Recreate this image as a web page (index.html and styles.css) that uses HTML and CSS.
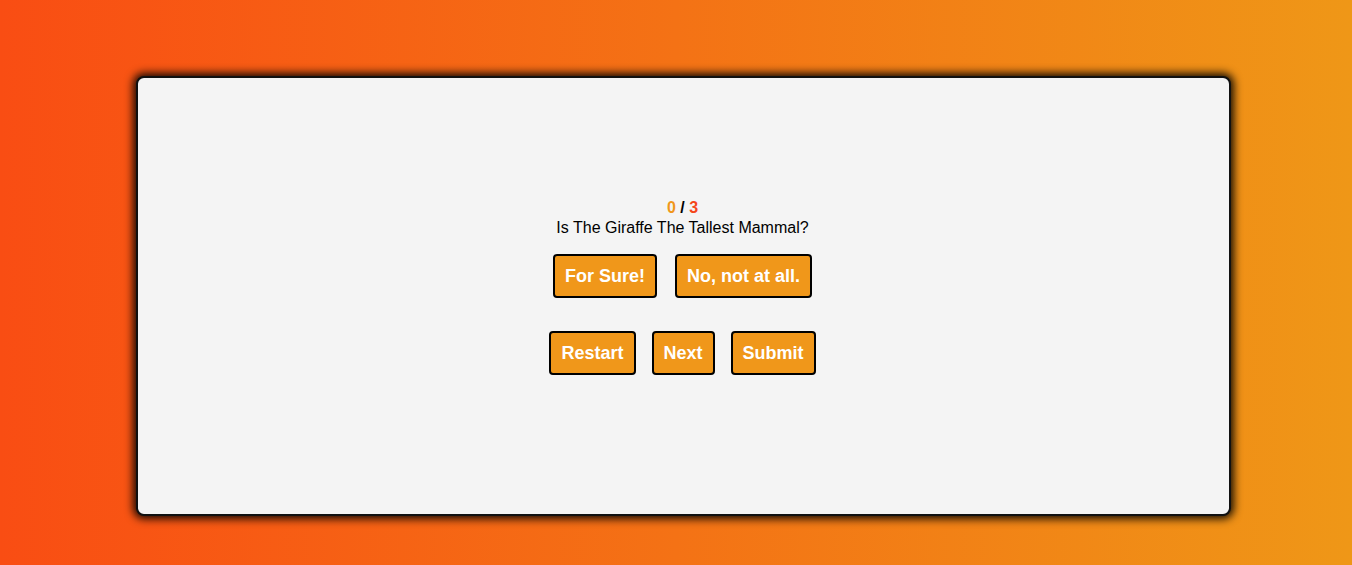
FILE: index.html
```html
<!DOCTYPE html>
<html lang="en">
<head>
<meta charset="utf-8">
<title>Quiz</title>
<link rel="stylesheet" href="styles.css">
</head>
<body>
<main class="card">
  <div class="quiz">
    <div class="score"><span class="score-now">0</span> / <span class="score-total">3</span></div>
    <div class="question">Is The Giraffe The Tallest Mammal?</div>
    <div class="row answers">
      <button class="btn">For Sure!</button>
      <button class="btn">No, not at all.</button>
    </div>
    <div class="row controls">
      <button class="btn">Restart</button>
      <button class="btn">Next</button>
      <button class="btn">Submit</button>
    </div>
  </div>
</main>
</body>
</html>
```
FILE: styles.css
```css
html, body {
  margin: 0;
  height: 100%;
}
body {
  background: linear-gradient(to right, #f94d13, #ef9717);
  font-family: "Liberation Sans", Arial, sans-serif;
  box-sizing: border-box;
  padding: 76px 0 0 136px;
}
.card {
  box-sizing: border-box;
  width: 1095px;
  height: 440px;
  background: #f4f4f4;
  border: 2px solid #111;
  border-radius: 8px;
  box-shadow: 0 0 9px 3px rgba(0, 0, 0, 0.9);
  display: flex;
  align-items: center;
  justify-content: center;
}
.quiz {
  display: flex;
  flex-direction: column;
  align-items: center;
  margin-top: -20px;
  margin-left: -2px;
}
.score {
  font-weight: bold;
  font-size: 16px;
  line-height: 20px;
  color: #000;
}
.score-now { color: #f0971a; }
.score-total { color: #f5461a; }
.question {
  font-size: 16px;
  line-height: 20px;
  color: #000;
}
.row {
  display: flex;
}
.answers { margin-top: 16px; gap: 18px; }
.controls { margin-top: 33px; gap: 16px; }
.btn {
  font-family: "Liberation Sans", Arial, sans-serif;
  font-weight: bold;
  font-size: 18px;
  line-height: 20px;
  color: #fff;
  background: #f0971a;
  border: 2px solid #000;
  border-radius: 4px;
  padding: 10px 10px;
  cursor: pointer;
}
```
